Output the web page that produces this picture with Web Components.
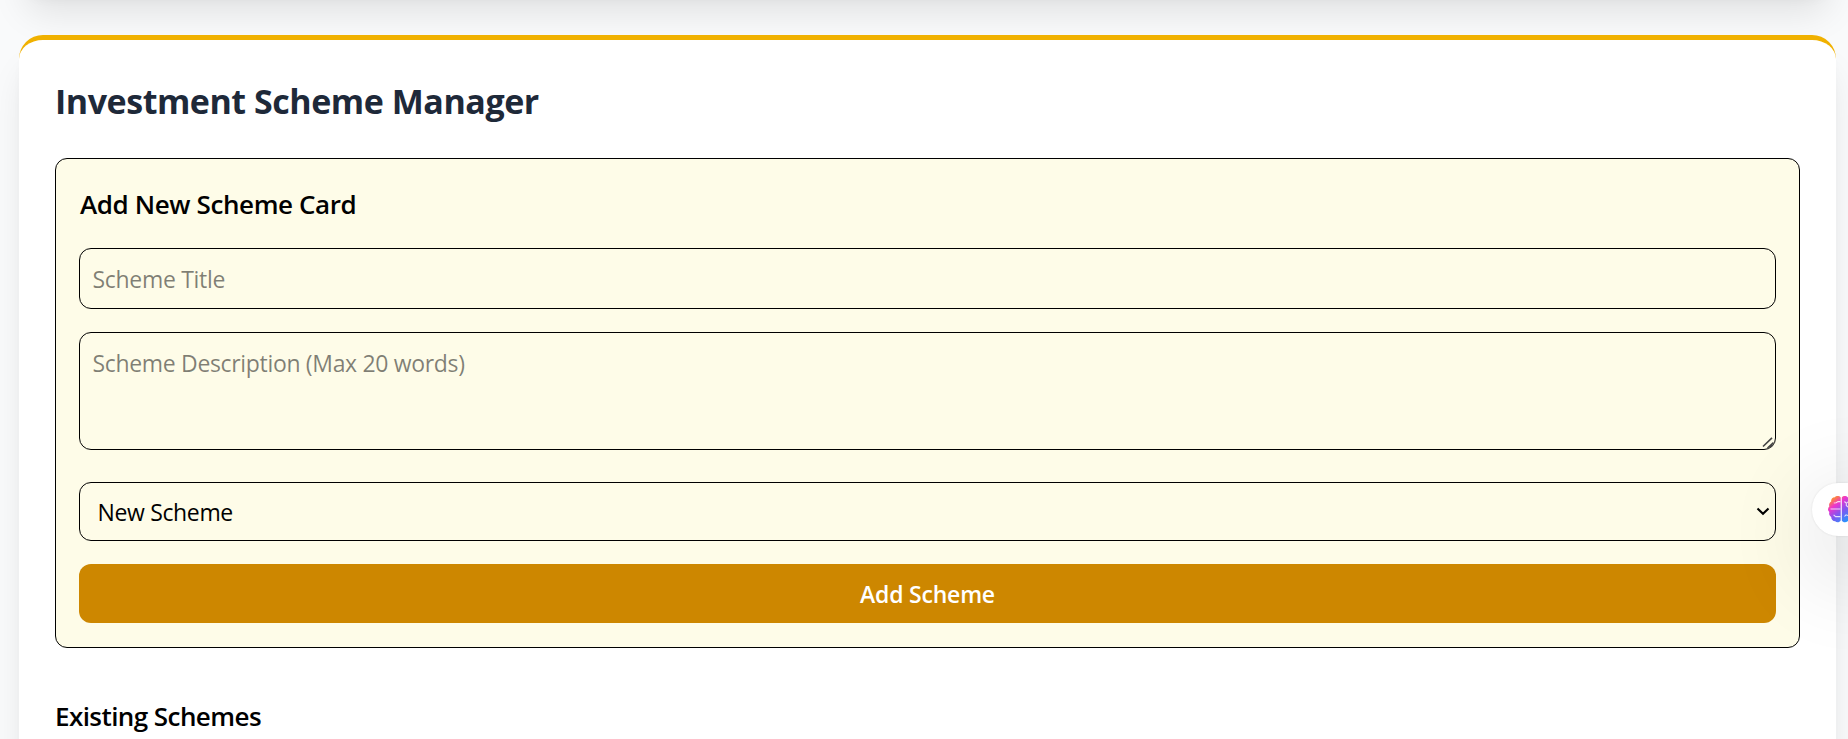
<!DOCTYPE html>
<html lang="en">
<head>
<meta charset="utf-8">
<title>Investment Scheme Manager</title>
<style>
html, body { margin: 0; height: 100%; overflow: hidden; }
body { background: #f9fafb; font-family: "Open Sans", "Noto Sans", sans-serif; color: #000; }
</style>
</head>
<body>
<scheme-page>
  <panel-card class="previous"></panel-card>
  <panel-card class="manager" heading="Investment Scheme Manager">
    <scheme-form heading="Add New Scheme Card">
      <text-field placeholder="Scheme Title"></text-field>
      <text-area placeholder="Scheme Description (Max 20 words)"></text-area>
      <select-field option="New Scheme"></select-field>
      <action-button>Add Scheme</action-button>
    </scheme-form>
    <section-title>Existing Schemes</section-title>
  </panel-card>
</scheme-page>
<assistant-tab></assistant-tab>

<script>
const define = (name, render) => customElements.define(name, class extends HTMLElement {
  connectedCallback() {
    if (!this.shadowRoot) this.attachShadow({ mode: 'open' }).innerHTML = render(this);
  }
});

define('scheme-page', () => `
<style>
:host { display: flex; flex-direction: column; gap: 45px; padding: 0 12px 0 19px; height: 739px; box-sizing: border-box; overflow: hidden; }
::slotted(.previous) { height: 120px; margin-top: -130px; }
::slotted(.manager) { height: 900px; }
</style><slot></slot>`);

define('panel-card', el => `
<style>
:host { display: block; flex: none; box-sizing: border-box; background: #fff; border-top: 5px solid #f0b100; border-radius: 24px; padding: 36px;
  box-shadow: 0 30px 37.5px -7.5px rgba(0,0,0,.1), 0 12px 15px -9px rgba(0,0,0,.1); }
h2 { margin: 0 0 32px; font-size: 34px; font-weight: 700; line-height: 50px; letter-spacing: -.46px; color: #1e2939; }
</style>
${el.getAttribute('heading') ? `<h2>${el.getAttribute('heading')}</h2>` : ''}<slot></slot>`);

define('scheme-form', el => `
<style>
:host { display: flex; flex-direction: column; box-sizing: border-box; height: 490px; padding: 24px 23px; margin-bottom: 47px;
  border: 1px solid #000; border-radius: 12px; background: #fefce8; }
h3 { margin: 0 0 23px; font-size: 26px; font-weight: 600; line-height: 42px; letter-spacing: -.39px; text-indent: 1px; }
</style>
<h3>${el.getAttribute('heading')}</h3><slot></slot>`);

define('section-title', () => `
<style>:host { display: block; font-size: 26px; font-weight: 600; line-height: 42px; letter-spacing: -.57px; }</style><slot></slot>`);

const control = `
display: block; box-sizing: border-box; width: 100%; margin: 0; border: 1px solid #000; border-radius: 12px;
background: transparent; font: 400 23px/36px "Open Sans", "Noto Sans", sans-serif; outline: none;`;

define('text-field', el => `
<style>
:host { display: block; height: 61px; margin-bottom: 23px; }
input { ${control} height: 61px; padding: 1px 12px 0 12.5px; letter-spacing: -.31px; }
input::placeholder { color: rgba(0,0,0,.5); opacity: 1; }
</style><input placeholder="${el.getAttribute('placeholder')}">`);

define('text-area', el => `
<style>
:host { display: block; position: relative; height: 118px; margin-bottom: 32px; }
textarea { ${control} height: 118px; padding: 12px 12px 12px 12.5px; resize: none; overflow: hidden; letter-spacing: -.33px; }
textarea::placeholder { color: rgba(0,0,0,.5); opacity: 1; }
svg { position: absolute; right: 1px; bottom: 1px; }
</style><textarea placeholder="${el.getAttribute('placeholder')}"></textarea>
<svg width="13" height="12" viewBox="0 0 13 12" fill="none" stroke="#444" stroke-width="1.6"><path d="M1 9.500 10 .8M5.500 11 11.500 5.500M8 10.500 11 8"/></svg>`);

define('select-field', el => `
<style>
:host { display: block; position: relative; height: 59px; margin-bottom: 23px; }
select { ${control} height: 59px; padding: 1px 40px 0 17.5px; color: #000; appearance: none; letter-spacing: -.35px; }
svg { position: absolute; right: 6px; top: 25px; }
</style><select><option>${el.getAttribute('option')}</option></select>
<svg width="14" height="10" viewBox="0 0 14 10" fill="none" stroke="#000" stroke-width="2.1"><path d="m1.500 1.500 5.500 5.300 5.500-5.300"/></svg>`);

define('action-button', () => `
<style>
:host { display: block; }
button { display: block; box-sizing: border-box; width: 100%; height: 59px; margin: 0; padding: 1px 0 0; border: 0; border-radius: 12px;
  background: #cd8700; color: #fff; font: 600 23px/36px "Open Sans", "Noto Sans", sans-serif; letter-spacing: -.21px; }
</style><button><slot></slot></button>`);

define('assistant-tab', () => `
<style>
:host { position: fixed; right: 0; top: 483px; display: flex; align-items: center; box-sizing: border-box; width: 36px; height: 53px;
  padding-left: 15px; overflow: visible; border-radius: 27px 0 0 27px; background: #fff;
  box-shadow: 0 0 3px rgba(0,0,0,.1), 18px 24px 90px 22px rgba(0,0,0,.12); }
svg { flex: none; margin-top: -1px; }
</style>
<svg width="21" height="28" viewBox="0 0 21 28">
<defs><linearGradient id="g" gradientUnits="userSpaceOnUse" x1="4" y1="2" x2="22" y2="26">
<stop offset="0" stop-color="#ff9a1f"/><stop offset=".12" stop-color="#fb7a50"/><stop offset=".3" stop-color="#ee35cd"/><stop offset=".6" stop-color="#8255f0"/><stop offset="1" stop-color="#1e9bff"/></linearGradient></defs>
<path fill="url(#g)" d="M13.700 2.500C12.500.8 9.200.6 8 2.200 5.300 2.200 3.800 4.300 4.200 6.500 2.200 7.700 1.700 9.700 2.300 11.400.6 13 .6 15.600 2.300 17 1.700 19.300 2.500 21 4.200 22c0 2.500 1.700 4.200 4 4.300 1.500 1.500 4.500 1.200 5.500-.8z"/>
<path fill="url(#g)" d="M14.800 2.500C16 .8 19.200.6 20.500 2.200l4 1v22l-4 1.100c-1.500 1.500-4.800 1.200-5.700-.8z"/>
<path fill="none" stroke="#fff" stroke-opacity=".8" stroke-width="1.100" d="M13.400 6.600H11L9.200 7.800 6.800 8M3.500 14h9.900M6.600 19.800l2 1.800h4.800M17.500 6.500l1.800 1.800L21 6.800M19.300 8.300V10.500L21 12M17.500 21.500l1.500-1.700 2 .7"/>
</svg>`);
</script>
</body>
</html>
